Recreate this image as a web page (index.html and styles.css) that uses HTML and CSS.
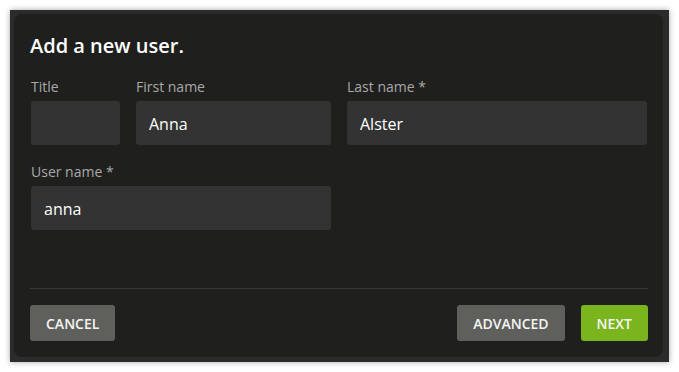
FILE: index.html
```html
<!DOCTYPE html>
<html lang="en">
<head>
    <meta charset="UTF-8">
    <meta name="viewport" content="width=device-width, initial-scale=1.0">
    <title>Add a new user</title>
    <link rel="stylesheet" href="styles.css">
</head>
<body>
    <div class="frame">
        <div class="dialog">
            <h2 class="dialog-title">Add a new user.</h2>

            <!-- Form fields -->
            <div class="form-grid">
                <div class="name-pair">
                    <div class="field">
                        <label for="title">Title</label>
                        <input type="text" id="title" class="text-input" value="">
                    </div>
                    <div class="field">
                        <label for="firstName">First name</label>
                        <input type="text" id="firstName" class="text-input" value="Anna">
                    </div>
                </div>
                <div class="field">
                    <label for="lastName">Last name *</label>
                    <input type="text" id="lastName" class="text-input" value="Alster">
                </div>
                <div class="field">
                    <label for="userName">User name *</label>
                    <input type="text" id="userName" class="text-input" value="anna">
                </div>
            </div>

            <!-- Footer -->
            <div class="dialog-footer">
                <button class="btn btn-grey">Cancel</button>
                <div class="footer-right">
                    <button class="btn btn-grey">Advanced</button>
                    <button class="btn btn-green">Next</button>
                </div>
            </div>
        </div>
    </div>
</body>
</html>
```

FILE: styles.css
```css
body {
    margin: 0;
    padding: 10px;
    background: #ffffff;
    font-family: "Open Sans", sans-serif;
}
.frame {
    width: 659px;
    height: 352px;
    box-sizing: border-box;
    padding: 4px 6px 5px 4px;
    background: #2b2b2b;
    box-shadow: 0 0 6px rgba(0, 0, 0, 0.35);
}
.dialog {
    height: 100%;
    box-sizing: border-box;
    padding: 18px 16px 16px 17px;
    background: #1f1f1e;
    border-radius: 8px;
    display: flex;
    flex-direction: column;
}
.dialog-title {
    margin: 0 0 16px -1px;
    font-size: 20px;
    font-weight: 600;
    line-height: 28px;
    color: #ffffff;
}
.form-grid {
    display: grid;
    grid-template-columns: 300px 300px;
    column-gap: 16px;
    row-gap: 16px;
}
.name-pair {
    display: grid;
    grid-template-columns: 89px 195px;
    column-gap: 16px;
}
.field {
    display: flex;
    flex-direction: column;
}
.field label {
    font-size: 14px;
    line-height: 20px;
    color: #a9a9a9;
    padding-top: 1px;
    margin-bottom: 4px;
}
.text-input {
    height: 44px;
    box-sizing: border-box;
    border: none;
    border-radius: 3px;
    background: #333333;
    color: #ffffff;
    font-family: "Open Sans", sans-serif;
    font-size: 16px;
    padding: 2px 13px 0;
    outline: none;
}
.dialog-footer {
    margin: auto -1px 0 -1px;
    border-top: 1px solid #383838;
    padding-top: 16px;
    display: flex;
    justify-content: space-between;
}
.footer-right {
    display: flex;
    gap: 16px;
}
.btn {
    height: 36px;
    padding: 0 16px;
    border: none;
    border-radius: 3px;
    font-family: "Open Sans", sans-serif;
    font-size: 14px;
    font-weight: 600;
    text-transform: uppercase;
    color: #f4f4f4;
    cursor: pointer;
}
.btn-grey {
    background: #5f5f5b;
}
.btn-green {
    background: #7ab51d;
}
```
